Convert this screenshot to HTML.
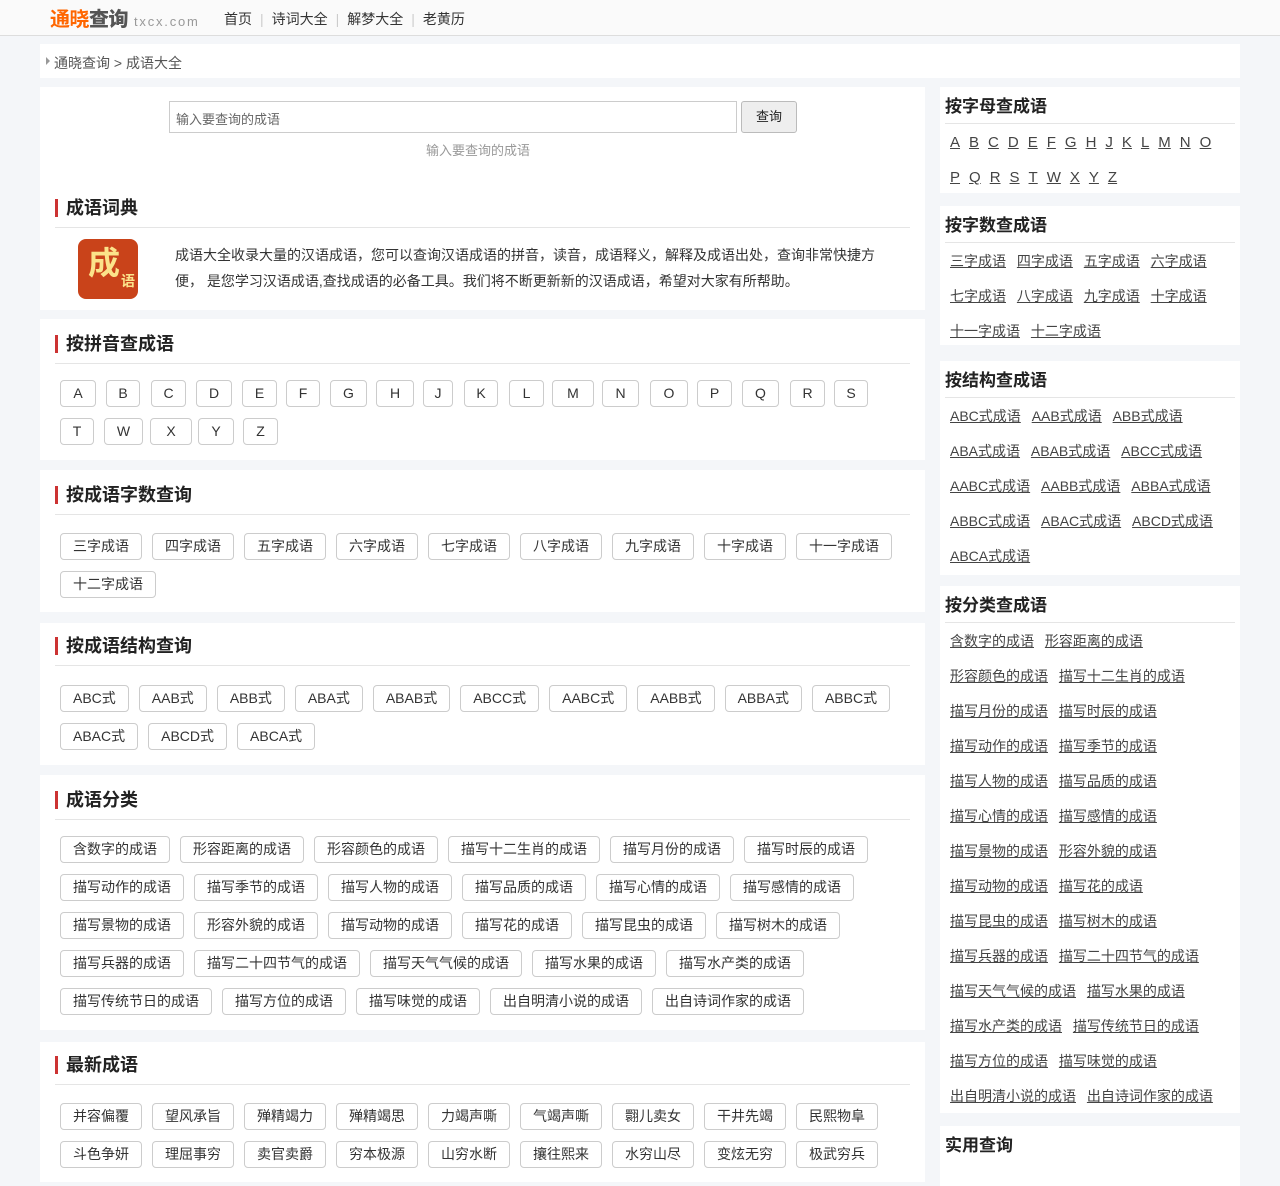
<!DOCTYPE html>
<html><head><meta charset="utf-8">
<style>
*{margin:0;padding:0;box-sizing:border-box}
body{width:1280px;height:1167px;overflow:hidden;background:#f4f6f9;font-family:"Liberation Sans","Noto Sans CJK SC",sans-serif;color:#333;font-size:14px;position:relative}
a{color:#333;text-decoration:none}
.hdr{position:absolute;left:0;top:0;width:1280px;height:36px;background:#fafafa;border-bottom:1px solid #ddd}
.logo{position:absolute;left:50px;top:3px;font-size:20px;font-weight:bold;color:#f60;letter-spacing:-0.5px}
.logo b{color:#555}
.logo span{font-size:13px;color:#999;font-weight:normal;letter-spacing:1.8px;margin-left:6px}
.nav{position:absolute;left:224px;top:9px;font-size:14px}
.nav i{color:#ccc;font-style:normal;margin:0 8px}
.card{position:absolute;background:#fff}
.bc{left:40px;top:44px;width:1200px;height:34px;padding:9px 0 0 14px;color:#555}
.bc:before{content:"";position:absolute;left:6px;top:13px;border-left:4px solid #999;border-top:4px solid transparent;border-bottom:4px solid transparent}
.main{left:40px;width:885px}
.t{position:absolute;left:15px;width:855px;height:38px;border-bottom:1px solid #e5e5e5;font-size:18px;font-weight:bold;padding:4px 0 0 11px;color:#222}
.t:before{content:"";position:absolute;left:0;top:9px;width:3px;height:18px;background:#c33}
.btns{position:absolute;left:20px;width:850px;font-size:0}
.btns a{display:inline-block;height:27px;line-height:25px;border:1px solid #ccc;border-radius:4px;padding:0 12px;margin:0 10px 11px 0;font-size:14px;color:#333;vertical-align:top}
.lb{position:absolute;left:20px;top:0;width:850px;height:100px}
.lb a{position:absolute;height:27px;line-height:25px;border:1px solid #ccc;border-radius:4px;text-align:center;font-size:14px}
.side{left:940px;width:300px}
.st{position:absolute;left:5px;top:5px;width:290px;height:32px;border-bottom:1px solid #e5e5e5;font-size:17px;font-weight:bold;color:#222}
.sl{position:absolute;left:10px;top:38px;width:285px;font-size:14px;line-height:35px}
.sl a{text-decoration:underline;margin-right:7px;color:#444}
.sl.let a{margin-right:9px;font-size:15px}
</style></head><body>
<div class="hdr"><div class="logo">通晓<b>查询</b><span>txcx.com</span></div>
<div class="nav"><a>首页</a><i>|</i><a>诗词大全</a><i>|</i><a>解梦大全</a><i>|</i><a>老黄历</a></div></div>
<div class="card bc">通晓查询 &gt; 成语大全</div>

<div class="card main" style="top:87px;height:223px">
<div style="position:absolute;left:129px;top:14px;width:568px;height:32px;border:1px solid #ccc;padding:7px 6px;color:#666;font-size:13px">输入要查询的成语</div>
<div style="position:absolute;left:701px;top:14px;width:56px;height:32px;border:1px solid #bbb;border-radius:3px;background:#eee;text-align:center;line-height:30px;font-size:13px;color:#222">查询</div>
<div style="position:absolute;left:386px;top:53px;color:#999;font-size:13px">输入要查询的成语</div>
<div class="t" style="top:103px">成语词典</div>
<div style="position:absolute;left:38px;top:152px;width:60px;height:60px;border-radius:8px;background:#c9431a;color:#fbe38a;font-size:32px;font-weight:bold;padding:4px 0 0 10px;line-height:40px">成<span style="font-size:14px;position:absolute;left:43px;top:34px;line-height:16px">语</span></div>
<div style="position:absolute;left:135px;top:155px;width:705px;font-size:14px;line-height:26px;color:#333">成语大全收录大量的汉语成语，您可以查询汉语成语的拼音，读音，成语释义，解释及成语出处，查询非常快捷方便， 是您学习汉语成语,查找成语的必备工具。我们将不断更新新的汉语成语，希望对大家有所帮助。</div>
</div>

<div class="card main" style="top:319px;height:141px">
<div class="t" style="top:7px">按拼音查成语</div>
<div class="lb" style="top:61px">
<a style="left:0;width:36px">A</a><a style="left:46px;width:34px">B</a><a style="left:91px;width:35px">C</a><a style="left:136px;width:36px">D</a><a style="left:182px;width:35px">E</a><a style="left:226px;width:34px">F</a><a style="left:270px;width:37px">G</a><a style="left:316px;width:38px">H</a><a style="left:363px;width:30px">J</a><a style="left:404px;width:34px">K</a><a style="left:449px;width:35px">L</a><a style="left:492px;width:42px">M</a><a style="left:542px;width:37px">N</a><a style="left:590px;width:38px">O</a><a style="left:637px;width:35px">P</a><a style="left:682px;width:37px">Q</a><a style="left:730px;width:35px">R</a><a style="left:774px;width:34px">S</a>
<a style="left:0;top:38px;width:34px">T</a><a style="left:44px;top:38px;width:39px">W</a><a style="left:90px;top:38px;width:42px">X</a><a style="left:138px;top:38px;width:36px">Y</a><a style="left:183px;top:38px;width:35px">Z</a>
</div>
</div>

<div class="card main" style="top:470px;height:142px">
<div class="t" style="top:7px">按成语字数查询</div>
<div class="btns" style="top:63px"><a>三字成语</a><a>四字成语</a><a>五字成语</a><a>六字成语</a><a>七字成语</a><a>八字成语</a><a>九字成语</a><a>十字成语</a><a>十一字成语</a><a>十二字成语</a></div>
</div>

<div class="card main" style="top:623px;height:142px">
<div class="t" style="top:5px">按成语结构查询</div>
<div class="btns" style="top:62px"><a>ABC式</a><a>AAB式</a><a>ABB式</a><a>ABA式</a><a>ABAB式</a><a>ABCC式</a><a>AABC式</a><a>AABB式</a><a>ABBA式</a><a>ABBC式</a><a>ABAC式</a><a>ABCD式</a><a>ABCA式</a></div>
</div>

<div class="card main" style="top:775px;height:255px">
<div class="t" style="top:7px">成语分类</div>
<div class="btns" style="top:61px"><a>含数字的成语</a><a>形容距离的成语</a><a>形容颜色的成语</a><a>描写十二生肖的成语</a><a>描写月份的成语</a><a>描写时辰的成语</a><a>描写动作的成语</a><a>描写季节的成语</a><a>描写人物的成语</a><a>描写品质的成语</a><a>描写心情的成语</a><a>描写感情的成语</a><a>描写景物的成语</a><a>形容外貌的成语</a><a>描写动物的成语</a><a>描写花的成语</a><a>描写昆虫的成语</a><a>描写树木的成语</a><a>描写兵器的成语</a><a>描写二十四节气的成语</a><a>描写天气气候的成语</a><a>描写水果的成语</a><a>描写水产类的成语</a><br><a>描写传统节日的成语</a><a>描写方位的成语</a><a>描写味觉的成语</a><a>出自明清小说的成语</a><a>出自诗词作家的成语</a></div>
</div>

<div class="card main" style="top:1042px;height:140px">
<div class="t" style="top:5px">最新成语</div>
<div class="btns" style="top:61px"><a>并容偏覆</a><a>望风承旨</a><a>殚精竭力</a><a>殚精竭思</a><a>力竭声嘶</a><a>气竭声嘶</a><a>翾儿卖女</a><a>干井先竭</a><a>民熙物阜</a><br><a>斗色争妍</a><a>理屈事穷</a><a>卖官卖爵</a><a>穷本极源</a><a>山穷水断</a><a>攘往熙来</a><a>水穷山尽</a><a>变炫无穷</a><a>极武穷兵</a></div>
</div>

<div class="card side" style="top:87px;height:106px"><div class="st">按字母查成语</div>
<div class="sl let"><a>A</a><a>B</a><a>C</a><a>D</a><a>E</a><a>F</a><a>G</a><a>H</a><a>J</a><a>K</a><a>L</a><a>M</a><a>N</a><a>O</a><br><a>P</a><a>Q</a><a>R</a><a>S</a><a>T</a><a>W</a><a>X</a><a>Y</a><a>Z</a></div></div>

<div class="card side" style="top:206px;height:139px"><div class="st">按字数查成语</div>
<div class="sl"><a>三字成语</a> <a>四字成语</a> <a>五字成语</a> <a>六字成语</a><br><a>七字成语</a> <a>八字成语</a> <a>九字成语</a> <a>十字成语</a><br><a>十一字成语</a> <a>十二字成语</a></div></div>

<div class="card side" style="top:361px;height:214px"><div class="st">按结构查成语</div>
<div class="sl"><a>ABC式成语</a> <a>AAB式成语</a> <a>ABB式成语</a><br><a>ABA式成语</a> <a>ABAB式成语</a> <a>ABCC式成语</a><br><a>AABC式成语</a> <a>AABB式成语</a> <a>ABBA式成语</a><br><a>ABBC式成语</a> <a>ABAC式成语</a> <a>ABCD式成语</a><br><a>ABCA式成语</a></div></div>

<div class="card side" style="top:586px;height:527px"><div class="st">按分类查成语</div>
<div class="sl"><a>含数字的成语</a> <a>形容距离的成语</a><br><a>形容颜色的成语</a> <a>描写十二生肖的成语</a><br><a>描写月份的成语</a> <a>描写时辰的成语</a><br><a>描写动作的成语</a> <a>描写季节的成语</a><br><a>描写人物的成语</a> <a>描写品质的成语</a><br><a>描写心情的成语</a> <a>描写感情的成语</a><br><a>描写景物的成语</a> <a>形容外貌的成语</a><br><a>描写动物的成语</a> <a>描写花的成语</a><br><a>描写昆虫的成语</a> <a>描写树木的成语</a><br><a>描写兵器的成语</a> <a>描写二十四节气的成语</a><br><a>描写天气气候的成语</a> <a>描写水果的成语</a><br><a>描写水产类的成语</a> <a>描写传统节日的成语</a><br><a>描写方位的成语</a> <a>描写味觉的成语</a><br><a>出自明清小说的成语</a> <a>出自诗词作家的成语</a></div></div>

<div class="card side" style="top:1126px;height:60px"><div class="st" style="border:none">实用查询</div></div>
</body></html>
